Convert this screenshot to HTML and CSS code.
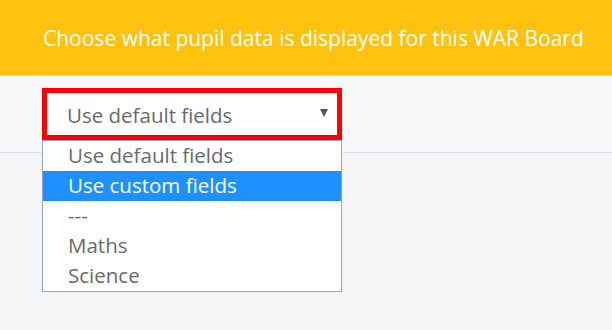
FILE: index.html
```html
<!DOCTYPE html>
<html lang="en">
<head>
  <meta charset="UTF-8" />
  <title>WAR Board fields</title>
  <link rel="stylesheet" href="styles.css">
</head>
<body>
  <div class="banner">
    <p>Choose what pupil data is displayed for this WAR Board</p>
  </div>

  <div class="panel">
    <div class="field-picker">
      <div class="picker-box">
        <span class="picker-value">Use default fields</span>
        <span class="picker-arrow"></span>
      </div>

      <ul class="picker-list">
        <li>Use default fields</li>
        <li class="active">Use custom fields</li>
        <li>---</li>
        <li>Maths</li>
        <li>Science</li>
      </ul>
    </div>
  </div>

  <div class="page-rest"></div>
</body>
</html>
```

FILE: styles.css
```css
body {
  margin: 0;
  font-family: "Open Sans", Arial, sans-serif;
  background: #f4f5f7;
}

.banner {
  background-color: #ffc20e;
  height: 75px;
  border-bottom: 1px solid #fbe08a;
  display: flex;
  align-items: center;
  padding-left: 43px;
}

.banner p {
  margin: 0;
  color: #fff;
  font-size: 21px;
}

.panel {
  background: #f7f8fa;
  height: 77px;
  border-bottom: 1px solid #dcdfe6;
  padding: 12px 0 0 42px;
  box-sizing: border-box;
}

.field-picker {
  position: relative;
  width: 300px;
}

.picker-box {
  height: 52px;
  box-sizing: border-box;
  border: 5px solid #ff0000;
  background: #fff;
  display: flex;
  align-items: center;
  justify-content: space-between;
  padding: 0 9px 0 20px;
}

.picker-value {
  font-size: 20.5px;
  color: #6a6a6a;
  margin-top: 1px;
}

.picker-arrow {
  width: 0;
  height: 0;
  border-left: 4px solid transparent;
  border-right: 4px solid transparent;
  border-top: 8px solid #555;
  margin-top: -3px;
}

/* open dropdown list */
.picker-list {
  position: absolute;
  top: 52px;
  left: 0;
  right: 0;
  margin: 0;
  padding: 0;
  list-style: none;
  background: #fff;
  border: 1px solid #8fa8d2;
  z-index: 10;
}

.picker-list li {
  height: 30px;
  line-height: 29px;
  padding-left: 25px;
  font-size: 20.5px;
  color: #6a6a6a;
}

.picker-list li.active {
  background: #1e90ff;
  color: #fff;
}

.page-rest {
  height: 180px;
}
```
